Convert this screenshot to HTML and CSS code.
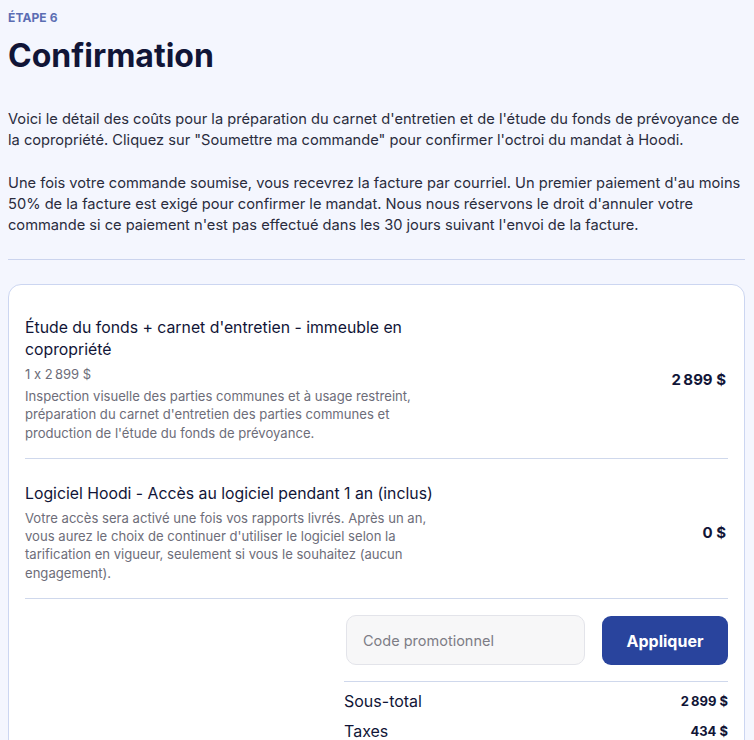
FILE: index.html
```html
<!DOCTYPE html>
<html lang="fr">
<head>
<meta charset="utf-8">
<title>Confirmation</title>
<link rel="stylesheet" href="styles.css">
</head>
<body>
<main class="page">
  <p class="step">ÉTAPE 6</p>
  <h1 class="title">Confirmation</h1>
  <div class="intro">
    <p>Voici le détail des coûts pour la préparation du carnet d'entretien et de l'étude du fonds de prévoyance de la copropriété. Cliquez sur "Soumettre ma commande" pour confirmer l'octroi du mandat à Hoodi.</p>
    <p>Une fois votre commande soumise, vous recevrez la facture par courriel. Un premier paiement d'au moins 50% de la facture est exigé pour confirmer le mandat. Nous nous réservons le droit d'annuler votre commande si ce paiement n'est pas effectué dans les 30 jours suivant l'envoi de la facture.</p>
  </div>
  <hr class="sep">
  <section class="card">
    <div class="item">
      <div class="item-info">
        <h2 class="item-title">Étude du fonds + carnet d'entretien - immeuble en copropriété</h2>
        <p class="item-qty">1 x 2&#8239;899 $</p>
        <p class="item-desc">Inspection visuelle des parties communes et à usage restreint, préparation du carnet d'entretien des parties communes et production de l'étude du fonds de prévoyance.</p>
      </div>
      <div class="item-price">2&#8239;899 $</div>
    </div>
    <div class="item">
      <div class="item-info">
        <h2 class="item-title">Logiciel Hoodi - Accès au logiciel pendant 1 an (inclus)</h2>
        <p class="item-desc">Votre accès sera activé une fois vos rapports livrés. Après un an, vous aurez le choix de continuer d'utiliser le logiciel selon la tarification en vigueur, seulement si vous le souhaitez (aucun engagement).</p>
      </div>
      <div class="item-price">0 $</div>
    </div>
    <div class="summary">
      <form class="promo">
        <input class="promo-input" type="text" placeholder="Code promotionnel">
        <button class="promo-btn" type="button">Appliquer</button>
      </form>
      <div class="totals">
        <div class="total-row"><span>Sous-total</span><strong>2&#8239;899 $</strong></div>
        <div class="total-row"><span>Taxes</span><strong>434 $</strong></div>
      </div>
    </div>
  </section>
</main>
</body>
</html>
```

FILE: styles.css
```css
html, body {
  background: #f4f6fe;
}
body {
  margin: 0;
  padding: 0 8px;
  font-family: "Inter", "Noto Sans", sans-serif;
  font-feature-settings: "calt" 0;
  color: #101437;
}
.page {
  width: 737px;
}
.step {
  margin: 10px 0 0;
  font-size: 12px;
  line-height: 16px;
  font-weight: 700;
  color: #5b6db3;
  letter-spacing: 0.1px;
}
.title {
  margin: 10px 0 0;
  font-size: 32px;
  line-height: 40px;
  font-weight: 700;
  color: #111537;
  letter-spacing: 0;
}
.intro {
  margin-top: 33px;
}
.intro p {
  margin: 0 0 22px;
  font-size: 14.65px;
  line-height: 21px;
  color: #2a2c3d;
  letter-spacing: 0;
}
.intro p:last-child {
  margin-bottom: 0;
}
.sep {
  margin: 23px 0 0;
  border: 0;
  border-top: 1px solid #cbd4ee;
  height: 0;
}
.card {
  margin-top: 24px;
  background: #fff;
  border: 1px solid #ccd6f1;
  border-radius: 13px;
  padding: 8px 16px 20px;
}
.item {
  display: flex;
  justify-content: space-between;
  align-items: center;
  padding: 24px 0 16px;
  border-bottom: 1px solid #cfd8ec;
}
.item-info {
  width: 432px;
}
.item-title {
  margin: 0;
  font-size: 15.8px;
  line-height: 22px;
  font-weight: 400;
  color: #111537;
  letter-spacing: 0;
}
.item-qty {
  margin: 4px 0 0;
  font-size: 13px;
  line-height: 18px;
  color: #6d6d79;
}
.item-desc {
  margin: 4px 0 0;
  font-size: 13.1px;
  line-height: 18.3px;
  color: #6d6d79;
}
.item-price {
  font-size: 15px;
  font-weight: 700;
  color: #111537;
  padding-right: 2px;
}
.summary {
  margin-left: auto;
  width: 384px;
}
.promo {
  display: flex;
  gap: 17px;
  padding: 16px 0 16px 2px;
  border-bottom: 1px solid #cfd8ec;
  margin: 0;
}
.promo-input {
  flex: 1 1 auto;
  min-width: 0;
  width: 0;
  height: 50px;
  box-sizing: border-box;
  border: 1px solid #e3e4ea;
  border-radius: 10px;
  background: #f7f7f8;
  padding: 0 16px;
  font-family: inherit;
  font-size: 14.5px;
  color: #111537;
  outline: none;
}
.promo-input::placeholder {
  color: #7d7d86;
}
.promo-btn {
  flex: none;
  width: 126px;
  height: 49px;
  margin-top: 1px;
  border: 0;
  border-radius: 9px;
  background: #29449d;
  color: #fff;
  font-family: inherit;
  font-size: 16px;
  font-weight: 700;
}
.totals {
  padding-top: 4px;
}
.total-row {
  display: flex;
  justify-content: space-between;
  align-items: center;
  height: 30px;
}
.total-row span {
  font-size: 16px;
  color: #111537;
}
.total-row strong {
  font-size: 13px;
  font-weight: 700;
  color: #111537;
}
```
